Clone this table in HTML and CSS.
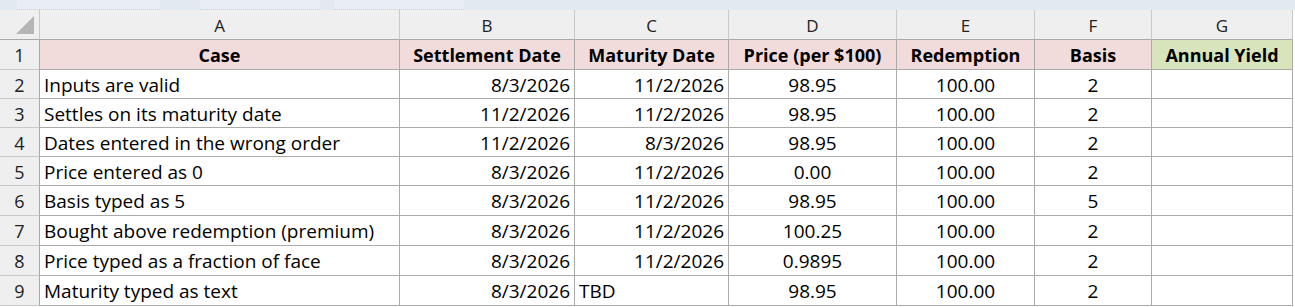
FILE: index.html
```html
<!DOCTYPE html>
<html>
<head>
<meta charset="utf-8">
<link rel="stylesheet" href="styles.css">
</head>
<body>
<div class="strip">
  <span class="tab t1"></span><span class="tab t2"></span><span class="tab t3"></span><span class="tab t4"></span>
</div>
<div class="sheet">
  <div class="corner"><span class="tri"></span></div>
  <div class="ch">A</div><div class="ch">B</div><div class="ch">C</div><div class="ch">D</div><div class="ch">E</div><div class="ch">F</div><div class="ch">G</div>

  <div class="rh">1</div>
  <div class="c hd">Case</div><div class="c hd">Settlement Date</div><div class="c hd">Maturity Date</div><div class="c hd">Price (per $100)</div><div class="c hd">Redemption</div><div class="c hd">Basis</div><div class="c hd green">Annual Yield</div>

  <div class="rh">2</div>
  <div class="c l">Inputs are valid</div><div class="c r">8/3/2026</div><div class="c r">11/2/2026</div><div class="c m">98.95</div><div class="c m">100.00</div><div class="c m">2</div><div class="c"></div>

  <div class="rh">3</div>
  <div class="c l">Settles on its maturity date</div><div class="c r">11/2/2026</div><div class="c r">11/2/2026</div><div class="c m">98.95</div><div class="c m">100.00</div><div class="c m">2</div><div class="c"></div>

  <div class="rh">4</div>
  <div class="c l">Dates entered in the wrong order</div><div class="c r">11/2/2026</div><div class="c r">8/3/2026</div><div class="c m">98.95</div><div class="c m">100.00</div><div class="c m">2</div><div class="c"></div>

  <div class="rh">5</div>
  <div class="c l">Price entered as 0</div><div class="c r">8/3/2026</div><div class="c r">11/2/2026</div><div class="c m">0.00</div><div class="c m">100.00</div><div class="c m">2</div><div class="c"></div>

  <div class="rh">6</div>
  <div class="c l">Basis typed as 5</div><div class="c r">8/3/2026</div><div class="c r">11/2/2026</div><div class="c m">98.95</div><div class="c m">100.00</div><div class="c m">5</div><div class="c"></div>

  <div class="rh">7</div>
  <div class="c l">Bought above redemption (premium)</div><div class="c r">8/3/2026</div><div class="c r">11/2/2026</div><div class="c m">100.25</div><div class="c m">100.00</div><div class="c m">2</div><div class="c"></div>

  <div class="rh">8</div>
  <div class="c l">Price typed as a fraction of face</div><div class="c r">8/3/2026</div><div class="c r">11/2/2026</div><div class="c m">0.9895</div><div class="c m">100.00</div><div class="c m">2</div><div class="c"></div>

  <div class="rh">9</div>
  <div class="c l">Maturity typed as text</div><div class="c r">8/3/2026</div><div class="c l">TBD</div><div class="c m">98.95</div><div class="c m">100.00</div><div class="c m">2</div><div class="c"></div>
</div>
</body>
</html>
```
FILE: styles.css
```css
html, body {
  margin: 0;
  padding: 0;
  background: #ffffff;
  overflow: hidden;
}
body {
  font-family: "Open Sans", Lato, "Liberation Sans", sans-serif;
  color: #000;
  width: 1295px;
  height: 307px;
}
.strip {
  height: 10px;
  background: #e3e9f0;
  display: flex;
}
.tab {
  display: block;
  height: 9px;
  background: #e9eef4;
  border-bottom: 1px dotted #c9d2dc;
}
.t1 { margin-left: 17px; width: 143px; }
.t2 { margin-left: 40px; width: 120px; }
.t3 { margin-left: 14px; width: 130px; }
.t4 { margin-left: 20px; width: 0; }
.sheet {
  display: grid;
  grid-template-columns: 40px 360px 175px 154px 168px 138px 117px 141px;
  grid-template-rows: 30px 30px 29px 29px 29px 29px 30px 30px 30px 30px;
  width: 1293px;
}
.sheet > div {
  box-sizing: border-box;
  display: flex;
  align-items: center;
  white-space: nowrap;
  overflow: hidden;
}
.corner {
  background: #efefef;
  border-right: 1px solid #c8c8c8;
  border-bottom: 1px solid #a8a8a8;
  position: relative;
}
.tri {
  position: absolute;
  right: 5px;
  bottom: 5px;
  width: 0;
  height: 0;
  border-left: 18px solid transparent;
  border-bottom: 18px solid #b5b5b5;
}
.ch {
  background: #efefef;
  border-right: 1px solid #c8c8c8;
  border-bottom: 1px solid #a8a8a8;
  justify-content: center;
  font-size: 17px;
  color: #222;
  padding-top: 1px;
}
.rh {
  background: #efefef;
  border-right: 1px solid #a8a8a8;
  border-bottom: 1px solid #c8c8c8;
  justify-content: center;
  font-size: 18px;
  color: #222;
  padding-top: 1px;
}
.c {
  border-right: 1px solid #ababab;
  border-bottom: 1px solid #ababab;
  font-size: 19px;
  padding: 1px 4px 0 4px;
}
.hd {
  background: #f2dcdb;
  font-weight: 700;
  font-size: 18px;
  justify-content: center;
}
.hd.green { background: #d8e4bc; }
.l { justify-content: flex-start; }
.r { justify-content: flex-end; }
.m { justify-content: center; }
```
